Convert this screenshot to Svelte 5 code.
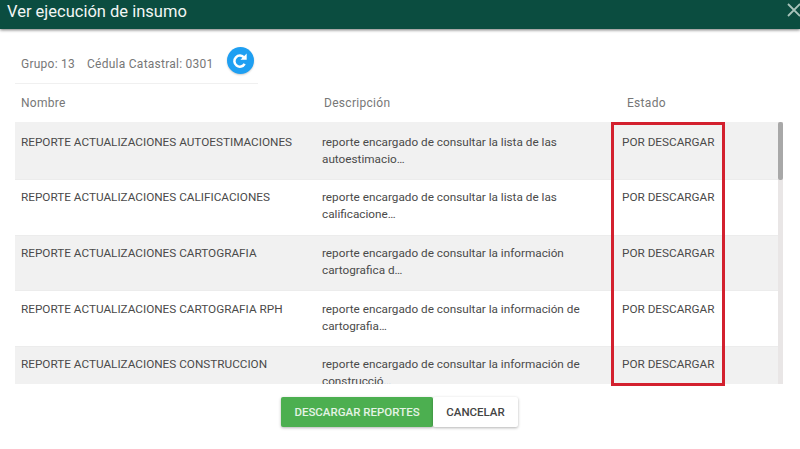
<script>
  const rows = [
    { name: 'REPORTE ACTUALIZACIONES AUTOESTIMACIONES', desc: 'reporte encargado de consultar la lista de las autoestimacio…' },
    { name: 'REPORTE ACTUALIZACIONES CALIFICACIONES', desc: 'reporte encargado de consultar la lista de las calificacione…' },
    { name: 'REPORTE ACTUALIZACIONES CARTOGRAFIA', desc: 'reporte encargado de consultar la información cartografica d…' },
    { name: 'REPORTE ACTUALIZACIONES CARTOGRAFIA RPH', desc: 'reporte encargado de consultar la información de cartografia…' },
    { name: 'REPORTE ACTUALIZACIONES CONSTRUCCION', desc: 'reporte encargado de consultar la información de construcció…' }
  ];
</script>

<div class="dialog">
  <header class="title">
    <h1>Ver ejecución de insumo</h1>
    <svg class="close" viewBox="0 0 14 14" width="14" height="14">
      <path d="M1 1 13 13M13 1 1 13" stroke="#a9c4bb" stroke-width="1.8" fill="none" />
    </svg>
  </header>

  <div class="info">
    <span>Grupo: 13</span>
    <span>Cédula Catastral: 0301</span>
    <button class="refresh" aria-label="Actualizar">
      <svg viewBox="0 0 24 24" width="20" height="20">
        <path fill="none" stroke="#fff" stroke-width="3" d="M17.6 15.4A6.6 6.6 0 1 1 17 8" />
        <path fill="#fff" d="M12.5 10.5h7.5V3z" />
      </svg>
    </button>
  </div>

  <div class="heads">
    <span>Nombre</span>
    <span class="h-desc">Descripción</span>
    <span class="h-state">Estado</span>
  </div>

  <div class="table">
    <div class="scroll">
      {#each rows as row}
        <div class="row">
          <div class="name">{row.name}</div>
          <div class="desc">{row.desc}</div>
          <div class="state">POR DESCARGAR</div>
        </div>
      {/each}
    </div>
    <div class="track"><div class="thumb"></div></div>
    <div class="mark"></div>
  </div>

  <div class="actions">
    <button class="primary">DESCARGAR REPORTES</button>
    <button class="cancel">CANCELAR</button>
  </div>
</div>

<style>
  :global(body) {
    margin: 0;
    background: #fff;
  }
  .dialog {
    width: 800px;
    height: 449px;
    overflow: hidden;
    font-family: Roboto, "Liberation Sans", sans-serif;
    background: #fff;
  }
  .title {
    height: 29px;
    background: #0b4d40;
    box-shadow: 0 1px 3px rgba(0, 0, 0, 0.55);
    display: flex;
    justify-content: space-between;
    align-items: flex-start;
    padding: 0 0 0 7px;
  }
  h1 {
    margin: 0;
    font-size: 16.5px;
    font-weight: 400;
    line-height: 24px;
    color: #f2f6f5;
  }
  .close {
    margin: 3px -1px 0 0;
    flex-shrink: 0;
  }
  .info {
    margin: 18px 0 0 15px;
    width: 243px;
    height: 37px;
    box-sizing: border-box;
    padding: 0 0 0 6px;
    border-bottom: 1px solid #f0f0f0;
    display: flex;
    align-items: flex-start;
    font-size: 12px;
    font-weight: 400;
    color: #777;
    line-height: 34px;
    gap: 12px;
    letter-spacing: 0.25px;
  }
  .refresh {
    width: 27px;
    height: 27px;
    margin: 0 0 0 1px;
    padding: 0;
    border: none;
    border-radius: 50%;
    background: #1e9ff2;
    box-shadow: 0 1px 2px rgba(0, 0, 0, 0.2);
    display: flex;
    align-items: center;
    justify-content: center;
  }
  .heads {
    height: 38px;
    display: grid;
    grid-template-columns: 303px 303px 1fr;
    padding-left: 21px;
    font-size: 12px;
    font-weight: 400;
    color: #777;
    line-height: 39px;
    letter-spacing: 0.3px;
  }
  .table {
    position: relative;
    margin-left: 15px;
    width: 768px;
    height: 262px;
  }
  .scroll {
    height: 262px;
    overflow: hidden;
  }
  .row {
    height: 55.5px;
    display: grid;
    grid-template-columns: 301px 300px 1fr;
    box-sizing: border-box;
    padding: 9px 0 0 6px;
    font-size: 11.75px;
    line-height: 17px;
    color: #4a4a4a;
    border-bottom: 1px solid #ececec;
  }
  .row:first-child {
    height: 58px;
    padding-top: 12px;
  }
  .row:nth-child(4) {
    padding-top: 10px;
  }
  .row:nth-child(odd) {
    background: #f1f1f1;
  }
  .desc {
    width: 262px;
  }
  .track {
    position: absolute;
    right: 0;
    top: 0;
    width: 5px;
    height: 262px;
    background: #e9e6e6;
  }
  .thumb {
    width: 5px;
    height: 58px;
    border-radius: 2px;
    background: #a8a8a8;
  }
  .mark {
    position: absolute;
    left: 596px;
    top: 0;
    width: 114px;
    height: 264px;
    box-sizing: border-box;
    border: 3.5px solid #d3202e;
  }
  .actions {
    display: flex;
    justify-content: center;
    margin: 13px 0 0 0;
    padding-right: 1px;
  }
  .actions button {
    height: 30px;
    border: none;
    border-radius: 2px;
    font-family: inherit;
    font-size: 11.5px;
    font-weight: 500;
    padding: 0;
    box-shadow: 0 1px 3px rgba(0, 0, 0, 0.3);
  }
  .primary {
    width: 152px;
    background: #4caf50;
    color: #e4f3e5;
  }
  .cancel {
    width: 85px;
    background: #fff;
    color: #444;
  }
</style>
